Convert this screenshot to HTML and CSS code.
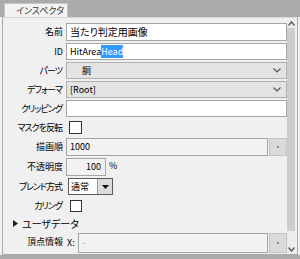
FILE: index.html
```html
<!DOCTYPE html>
<html lang="ja">
<head>
    <meta charset="UTF-8">
    <title>インスペクタ</title>
    <link rel="stylesheet" href="styles.css">
</head>
<body>
    <div class="tabbar">
        <div class="tab">インスペクタ</div>
    </div>
    <div class="window">
        <div class="panel">
            <div class="content">
                <div class="row h18">
                    <div class="label">名前</div>
                    <div class="field jp">当たり判定用画像</div>
                </div>
                <div class="row">
                    <div class="label">ID</div>
                    <div class="field">HitArea<span class="sel">Head</span></div>
                </div>
                <div class="row">
                    <div class="label kana">パーツ</div>
                    <div class="combo"><span class="combo-text indent">胴</span>
                        <svg class="chev" width="8" height="5" viewBox="0 0 8 5"><polyline points="0.5,0.5 4,4 7.5,0.5" fill="none" stroke="#555" stroke-width="1.2"/></svg>
                    </div>
                </div>
                <div class="row">
                    <div class="label kana">デフォーマ</div>
                    <div class="combo"><span class="combo-text">[Root]</span>
                        <svg class="chev" width="8" height="5" viewBox="0 0 8 5"><polyline points="0.5,0.5 4,4 7.5,0.5" fill="none" stroke="#555" stroke-width="1.2"/></svg>
                    </div>
                </div>
                <div class="row">
                    <div class="label kana">クリッピング</div>
                    <div class="field"></div>
                </div>
                <div class="row">
                    <div class="label kana">マスクを反転</div>
                    <div class="check-cell"><span class="check"></span></div>
                </div>
                <div class="row h18">
                    <div class="label">描画順</div>
                    <div class="pair">
                        <div class="field grey">1000</div>
                        <div class="spin"><span class="dot"></span></div>
                    </div>
                </div>
                <div class="row h18">
                    <div class="label">不透明度</div>
                    <div class="pair">
                        <div class="field grey num">100</div>
                        <span class="unit">%</span>
                    </div>
                </div>
                <div class="row">
                    <div class="label kana">ブレンド方式</div>
                    <div class="pair">
                        <div class="dropdown">
                            <span class="drop-text">通常</span>
                            <span class="drop-btn">
                                <svg width="7" height="4" viewBox="0 0 7 4"><polygon points="0,0 7,0 3.5,4" fill="#111"/></svg>
                            </span>
                        </div>
                    </div>
                </div>
                <div class="row">
                    <div class="label kana">カリング</div>
                    <div class="check-cell"><span class="check small"></span></div>
                </div>
                <div class="group">
                    <svg width="5" height="7" viewBox="0 0 5 7"><polygon points="0,0 5,3.5 0,7" fill="#222"/></svg>
                    <span>ユーザデータ</span>
                </div>
                <div class="row h20">
                    <div class="label">頂点情報</div>
                    <div class="pair">
                        <span class="axis">X:</span>
                        <div class="field grey dash">-</div>
                        <div class="spin"><span class="dot"></span></div>
                    </div>
                </div>
            </div>
            <div class="scrollbar">
                <div class="arrow">
                    <svg width="7" height="5" viewBox="0 0 7 5"><polyline points="0.5,4.5 3.5,1 6.5,4.5" fill="none" stroke="#555" stroke-width="1.3"/></svg>
                </div>
                <div class="thumb"></div>
                <div class="track"></div>
                <div class="arrow">
                    <svg width="7" height="5" viewBox="0 0 7 5"><polyline points="0.5,0.5 3.5,4 6.5,0.5" fill="none" stroke="#555" stroke-width="1.3"/></svg>
                </div>
            </div>
        </div>
    </div>
</body>
</html>
```

FILE: styles.css
```css
body {
    margin: 0;
    width: 300px;
    height: 259px;
    overflow: hidden;
    background-color: #ababab;
    font-family: "Noto Sans CJK JP", "Noto Sans", sans-serif;
    font-feature-settings: "palt";
    font-size: 9px;
    color: #000;
}
.tabbar {
    height: 17px;
    padding-left: 4px;
    display: flex;
    align-items: flex-end;
}
.tab {
    height: 14px;
    width: 64px;
    border: 1px solid #c6c6c6;
    border-bottom: none;
    background-color: #f2f2f2;
    color: #333;
    line-height: 14px;
    padding-left: 11px;
    box-sizing: border-box;
}
.window {
    height: 238px;
    padding: 0 2px;
    background-color: #f0f0f0;
}
.panel {
    height: 238px;
    box-sizing: border-box;
    border: 1px solid #a9a9a9;
    border-top-color: #d8d8d8;
    display: flex;
    overflow: hidden;
}
.content {
    flex: 1;
    padding-top: 5px;
    display: flex;
    flex-direction: column;
    gap: 2px;
}
.row {
    display: grid;
    grid-template-columns: 60px 1fr;
    column-gap: 3px;
    height: 17px;
}
.h18 { height: 18px; }
.h20 { height: 20px; }
.label {
    text-align: right;
    line-height: 17px;
    white-space: nowrap;
}
.label.kana {
    letter-spacing: -1px;
    padding-right: 1px;
}
.field {
    box-sizing: border-box;
    border: 1px solid #a6a6a6;
    background-color: #fff;
    padding-left: 3px;
    line-height: 15px;
    white-space: nowrap;
    overflow: hidden;
}
.field.jp {
    font-size: 10px;
}
.field.grey {
    background-color: #f2f2f2;
    flex: 1;
}
.sel {
    background-color: #3399ff;
    color: #fff;
}
.combo {
    box-sizing: border-box;
    border: 1px solid #b0b0b0;
    background-color: #e3e3e3;
    display: flex;
    align-items: center;
    justify-content: space-between;
    padding: 0 5px 0 3px;
}
.combo-text.indent { padding-left: 12px; }
.check-cell {
    display: flex;
    align-items: center;
    padding-left: 3px;
}
.check {
    width: 11px;
    height: 11px;
    border: 1px solid #333;
    background-color: #fff;
}
.check.small {
    width: 10px;
    height: 10px;
    margin-left: 1px;
}
.pair {
    display: flex;
    align-items: stretch;
    gap: 1px;
}
.spin {
    width: 18px;
    box-sizing: border-box;
    border: 1px solid #c4c4c4;
    background-color: #dadada;
    display: flex;
    align-items: center;
    justify-content: center;
}
.dot {
    width: 2px;
    height: 2px;
    background-color: #8a8a8a;
}
.field.num {
    flex: none;
    width: 40px;
    text-align: right;
    padding-right: 4px;
}
.unit {
    padding-left: 2px;
    line-height: 16px;
}
.dropdown {
    margin-left: 2px;
    display: flex;
    border: 1px solid #5a5a5a;
    background-color: #fff;
}
.drop-text {
    width: 26px;
    padding-left: 2px;
    line-height: 15px;
}
.drop-btn {
    width: 14px;
    border-left: 1px solid #9a9a9a;
    background-color: #dcdcdc;
    display: flex;
    align-items: center;
    justify-content: center;
}
.group {
    height: 15px;
    display: flex;
    align-items: center;
    gap: 4px;
    padding-left: 10px;
    font-size: 10px;
}
.axis {
    width: 10px;
    padding-left: 1px;
    line-height: 20px;
}
.field.dash {
    color: #999;
    line-height: 18px;
}
.scrollbar {
    width: 8px;
    margin: 1px 2px 0 0;
    display: flex;
    flex-direction: column;
    background-color: #ececec;
}
.arrow {
    height: 9px;
    display: flex;
    align-items: center;
    justify-content: center;
}
.thumb {
    height: 203px;
    background-color: #cdcdcd;
}
.track {
    flex: 1;
}
```
